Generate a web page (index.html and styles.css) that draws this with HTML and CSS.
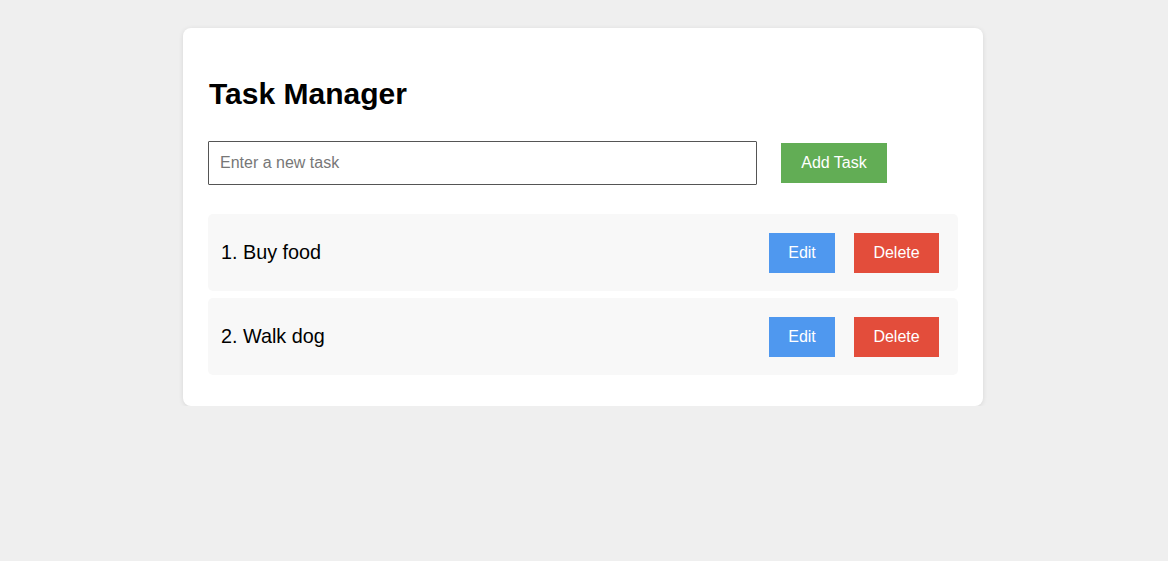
FILE: index.html
```html
<!DOCTYPE html>
<html>
<head>
<meta charset="utf-8">
<link rel="stylesheet" href="styles.css">
</head>
<body>
<div class="card">
  <h1 class="title">Task Manager</h1>
  <div class="add-row">
    <input class="task-input" type="text" placeholder="Enter a new task">
    <button class="btn btn-add">Add Task</button>
  </div>
  <ul class="task-list">
    <li class="task">
      <span class="task-text">1. Buy food</span>
      <div class="actions">
        <button class="btn btn-edit">Edit</button>
        <button class="btn btn-delete">Delete</button>
      </div>
    </li>
    <li class="task">
      <span class="task-text">2. Walk dog</span>
      <div class="actions">
        <button class="btn btn-edit">Edit</button>
        <button class="btn btn-delete">Delete</button>
      </div>
    </li>
  </ul>
</div>
</body>
</html>
```
FILE: styles.css
```css
* { box-sizing: border-box; }
html, body { margin: 0; padding: 0; }
body {
  background: #efefef;
  font-family: "Liberation Sans", Arial, sans-serif;
  padding-top: 28px;
}
.card {
  width: 800px;
  margin: 0 auto;
  background: #fff;
  border-radius: 8px;
  box-shadow: 0 1px 5px rgba(0,0,0,0.1);
  padding: 25px 25px 31px 25px;
  position: relative;
  left: -1px;
}
.title {
  font-size: 30px;
  font-weight: bold;
  margin: 23px 0 0 1px;
  line-height: 36px;
  color: #000;
}
.add-row {
  display: flex;
  align-items: center;
  margin-top: 29px;
}
.task-input {
  width: 549px;
  height: 44px;
  border: 1px solid #555;
  border-radius: 1px;
  padding: 0 11px;
  font-size: 16px;
  font-family: "Liberation Sans", Arial, sans-serif;
  color: #333;
}
.task-input::placeholder { color: #777; }
.btn {
  border: none;
  color: #fff;
  font-size: 16px;
  font-family: "Liberation Sans", Arial, sans-serif;
  height: 40px;
  padding: 0 18px;
  cursor: pointer;
}
.btn-add {
  background: #62ad55;
  margin-left: 24px;
  width: 106px;
  padding: 0;
}
.task-list {
  list-style: none;
  margin: 29px 0 0 0;
  padding: 0;
  display: flex;
  flex-direction: column;
  gap: 7px;
}
.task {
  background: #f8f8f8;
  border-radius: 5px;
  height: 77px;
  display: flex;
  align-items: center;
  justify-content: space-between;
  padding: 0 19px 0 13px;
}
.task-text {
  font-size: 19.8px;
  color: #000;
}
.actions {
  display: flex;
  gap: 19px;
}
.btn-edit { background: #4f98ef; width: 66px; padding: 0; }
.btn-delete { background: #e34d3b; width: 85px; padding: 0; }
```
